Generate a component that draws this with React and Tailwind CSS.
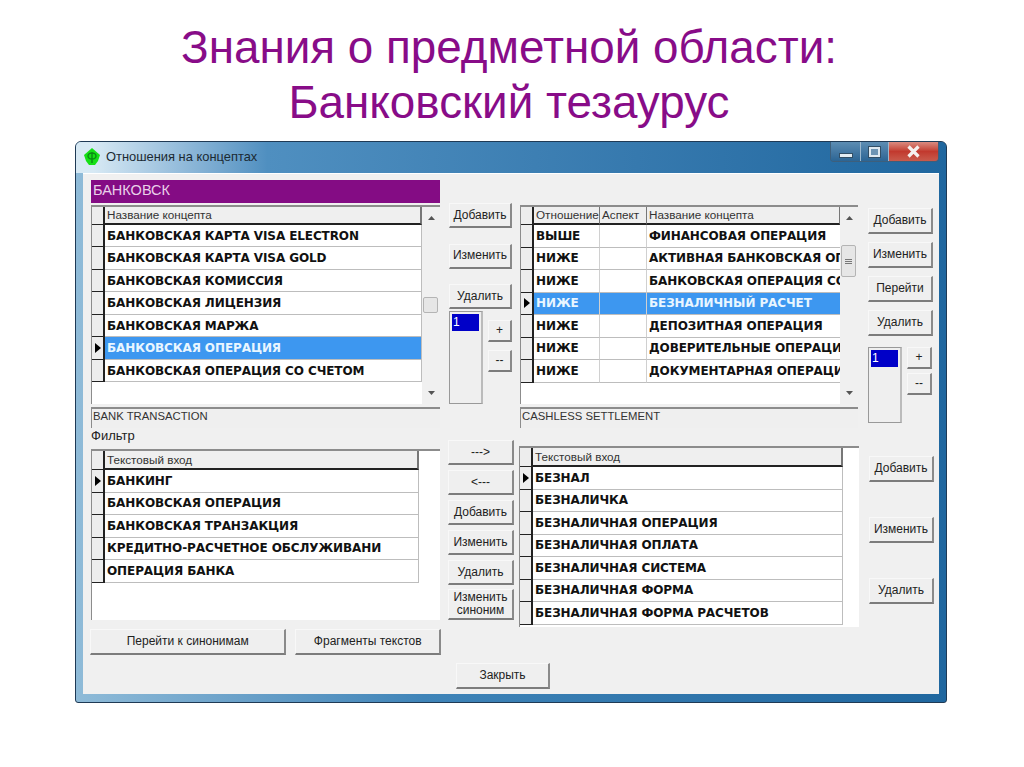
const FONT = "font-['Liberation_Sans',Arial,sans-serif]";

function Btn({ children, className = "" }) {
  return (
    <div className={`flex items-center justify-center text-center bg-[#efefef] border border-t-[#f8f8f8] border-l-[#f8f8f8] border-r-[#8a8a8a] border-b-[#7c7c7c] border-r-2 border-b-2 text-[12px] leading-[13px] text-[#222] ${className}`}>
      {children}
    </div>
  );
}

function Arrow({ up }) {
  return (
    <svg width="9" height="5" viewBox="0 0 9 5" className="block">
      <path d={up ? "M1 5 L4.5 1 L8 5 Z" : "M1 0 L4.5 4 L8 0 Z"} fill="#555" />
    </svg>
  );
}

function Scrollbar({ thumbTop, thumbH, grip }) {
  return (
    <div className="w-[18px] bg-[#f0f0f0] flex flex-col items-center justify-between py-[8px] relative shrink-0">
      <Arrow up />
      <div style={{ top: thumbTop, height: thumbH }} className="absolute left-[1px] right-[2px] bg-[#e6e6e6] border border-[#b4b4b4] rounded-[2px] flex flex-col items-center justify-center gap-[1px]">
        {grip && <><i className="block w-[7px] h-px bg-[#777]" /><i className="block w-[7px] h-px bg-[#777]" /><i className="block w-[7px] h-px bg-[#777]" /></>}
      </div>
      <Arrow />
    </div>
  );
}

function Indicator({ active }) {
  return (
    <div className="w-[13px] shrink-0 bg-[#ededed] border-r-2 border-b border-r-[#222] border-b-[#222] flex items-center justify-center">
      {active && (
        <svg width="6" height="10" viewBox="0 0 6 10"><path d="M0 0 L6 5 L0 10 Z" fill="#000" /></svg>
      )}
    </div>
  );
}

function Cell({ children, sel, className = "" }) {
  return (
    <div className={`font-['DejaVu_Sans',sans-serif] font-bold text-[12px] tracking-[-0.1px] whitespace-nowrap overflow-hidden flex items-center pl-[2px] border-b border-b-[#bdbdbd] ${sel ? "bg-[#3d97f0] text-[#e9f6ff]" : "text-[#111] bg-white"} ${className}`}>
      {children}
    </div>
  );
}

function Head({ children, className = "" }) {
  return (
    <div className={`text-[11.7px] text-[#333] flex items-center pl-[2px] bg-[#efefef] border-r border-r-[#777] whitespace-nowrap overflow-hidden ${className}`}>
      {children}
    </div>
  );
}

function SingleGrid({ title, rows, active, width }) {
  return (
    <div className="bg-white border-t-2 border-l border-t-[#8c8c8c] border-l-[#8c8c8c] flex-1 flex flex-col">
      <div className="flex h-[19px]" style={{ width }}>
        <Indicator />
        <Head className="flex-1 border-b-2 border-b-[#222] border-r-2 border-r-[#222]">{title}</Head>
      </div>
      {rows.map((r, i) => (
        <div key={r} className="flex h-[22.5px]" style={{ width }}>
          <Indicator active={i === active} />
          <Cell className="flex-1 border-r border-r-[#bdbdbd]">{r}</Cell>
        </div>
      ))}
    </div>
  );
}

function ListBox({ className }) {
  return (
    <div className={`bg-[#efefef] border-t border-l border-r-2 border-b border-[#999] border-r-[#bbb] p-[2px] ${className}`}>
      <div className="bg-[#0000c8] text-white text-[12px] leading-[16px] h-[17px] pl-[1px]">1</div>
    </div>
  );
}

function InfoBar({ children }) {
  return (
    <div className="h-[21px] mt-[3px] bg-[#efefef] border-t-2 border-l border-t-[#8c8c8c] border-l-[#8c8c8c] text-[11.3px] leading-[14px] pl-[1px] text-[#333] whitespace-nowrap">
      {children}
    </div>
  );
}

const leftRows = ["БАНКОВСКАЯ КАРТА VISA ELECTRON", "БАНКОВСКАЯ КАРТА VISA GOLD", "БАНКОВСКАЯ КОМИССИЯ", "БАНКОВСКАЯ ЛИЦЕНЗИЯ", "БАНКОВСКАЯ МАРЖА", "БАНКОВСКАЯ ОПЕРАЦИЯ", "БАНКОВСКАЯ ОПЕРАЦИЯ СО СЧЕТОМ"];
const relRows = [["ВЫШЕ", "ФИНАНСОВАЯ ОПЕРАЦИЯ"], ["НИЖЕ", "АКТИВНАЯ БАНКОВСКАЯ ОП"], ["НИЖЕ", "БАНКОВСКАЯ ОПЕРАЦИЯ СО"], ["НИЖЕ", "БЕЗНАЛИЧНЫЙ РАСЧЕТ"], ["НИЖЕ", "ДЕПОЗИТНАЯ ОПЕРАЦИЯ"], ["НИЖЕ", "ДОВЕРИТЕЛЬНЫЕ ОПЕРАЦИ"], ["НИЖЕ", "ДОКУМЕНТАРНАЯ ОПЕРАЦИ"]];
const filterRows = ["БАНКИНГ", "БАНКОВСКАЯ ОПЕРАЦИЯ", "БАНКОВСКАЯ ТРАНЗАКЦИЯ", "КРЕДИТНО-РАСЧЕТНОЕ ОБСЛУЖИВАНИ", "ОПЕРАЦИЯ БАНКА"];
const synRows = ["БЕЗНАЛ", "БЕЗНАЛИЧКА", "БЕЗНАЛИЧНАЯ ОПЕРАЦИЯ", "БЕЗНАЛИЧНАЯ ОПЛАТА", "БЕЗНАЛИЧНАЯ СИСТЕМА", "БЕЗНАЛИЧНАЯ ФОРМА", "БЕЗНАЛИЧНАЯ ФОРМА РАСЧЕТОВ"];

function TitleBar() {
  return (
    <div className="h-[31px] flex items-start pl-[6px] pr-[7px] bg-gradient-to-r from-[#d7e9f4] from-[2%] via-[#4f8fc0] via-[22%] to-[#1f679f] relative">
      <svg width="20" height="20" viewBox="0 0 20 20" className="mt-[5px] shrink-0">
        <path d="M10 1 L18 8 L16 14 L13 18 L7 18 L4 14 L2 8 Z" fill="#16e016" />
        <path d="M10 5 V16 M6 9 a4 3 0 0 1 8 0 a4 3 0 0 1 -8 0" stroke="#0a8a14" strokeWidth="1.4" fill="none" />
      </svg>
      <span className="ml-[4px] mt-[8px] text-[12.9px] leading-[14px] text-[#1b2a33] whitespace-nowrap">Отношения на концептах</span>
      <div className="ml-auto flex h-[20px] rounded-b-[4px] border border-t-0 border-[#3d5f7c] overflow-hidden">
        <div className="w-[30px] bg-gradient-to-b from-[#5d8db3] to-[#2c6594] flex items-end justify-center pb-[3px] border-r border-[#9cb9cf]">
          <i className="block w-[14px] h-[5px] bg-[#e4edf3] border border-[#324f66]" />
        </div>
        <div className="w-[28px] bg-gradient-to-b from-[#5d8db3] to-[#2c6594] flex items-center justify-center border-r border-[#9cb9cf]">
          <i className="block w-[11px] h-[10px] border-2 border-[#dfe9f0] outline outline-1 outline-[#324f66] bg-[#6d94b3]" />
        </div>
        <div className="w-[49px] bg-gradient-to-b from-[#d98a80] via-[#c2392e] to-[#c85a4c] flex items-center justify-center">
          <svg width="15" height="13" viewBox="0 0 15 13"><path d="M2.5 1.5 L12.5 11.5 M12.5 1.5 L2.5 11.5" stroke="#f5f0ee" strokeWidth="3.2" /></svg>
        </div>
      </div>
    </div>
  );
}

export default function App() {
  return (
    <div className={`w-[1024px] h-[767px] bg-white overflow-hidden ${FONT}`}>
      <h1 className="pt-[20px] pr-[6px] text-center text-[#880c88] text-[45.8px] leading-[55px] font-normal h-[141px]">
        Знания о предметной области:<br />Банковский тезаурус
      </h1>
      <div className="ml-[75px] w-[872px] h-[562px] flex flex-col rounded-t-[6px] rounded-b-[3px] overflow-hidden border border-[#1f3a55] bg-gradient-to-r from-[#8fbbd8] via-[#3f84b8] via-[40%] to-[#1f679f]">
        <TitleBar />
        <div className="flex-1 mx-[7px] mb-[8px] bg-[#f0f0f0] border-t border-t-[#fff] pt-[6px] pl-[7px] flex flex-col bg-clip-padding">
          {/* top row */}
          <div className="flex h-[248px]">
            <div className="w-[349px] flex flex-col ml-[1px]">
              <div className="h-[23px] bg-[#840c84] text-[#e9d0e9] text-[14.5px] leading-[21px] pl-[2px]">БАНКОВСК</div>
              <div className="flex h-[201px] mt-[2px] bg-white border-t-2 border-l border-t-[#8c8c8c] border-l-[#8c8c8c]">
                <div className="flex-1 flex flex-col min-w-0">
                  <div className="flex h-[18px]">
                    <Indicator />
                    <Head className="flex-1 border-b-2 border-b-[#222] border-r-2 border-r-[#222]">Название концепта</Head>
                  </div>
                  {leftRows.map((r, i) => (
                    <div key={r} className="flex h-[22.5px]">
                      <Indicator active={i === 5} />
                      <Cell sel={i === 5} className="flex-1 border-r border-r-[#bdbdbd]">{r}</Cell>
                    </div>
                  ))}
                </div>
                <Scrollbar thumbTop={90} thumbH={16} />
              </div>
              <InfoBar>BANK TRANSACTION</InfoBar>
            </div>

            <div className="w-[64px] ml-[9px] pt-[23px] relative shrink-0">
              <div className="flex flex-col gap-[15.5px] w-[63px]">
                <Btn className="h-[25px]">Добавить</Btn>
                <Btn className="h-[25px]">Изменить</Btn>
                <Btn className="h-[25px]">Удалить</Btn>
              </div>
              <div className="flex mt-[2px]">
                <ListBox className="w-[34px] h-[93px]" />
                <div className="ml-[5px] pt-[9px] flex flex-col gap-[8px]">
                  <Btn className="w-[24px] h-[22px]">+</Btn>
                  <Btn className="w-[24px] h-[22px]">--</Btn>
                </div>
              </div>
            </div>

            <div className="w-[338px] ml-[7px] flex flex-col">
              <div className="flex h-[201px] mt-[25px] bg-white border-t-2 border-l border-t-[#8c8c8c] border-l-[#8c8c8c]">
                <div className="flex-1 flex flex-col min-w-0">
                  <div className="flex h-[18px]">
                    <Indicator />
                    <Head className="w-[66px] border-b-2 border-b-[#222] shrink-0">Отношение</Head>
                    <Head className="w-[47px] border-b-2 border-b-[#222] shrink-0">Аспект</Head>
                    <Head className="flex-1 border-b-2 border-b-[#222]">Название концепта</Head>
                  </div>
                  {relRows.map((r, i) => (
                    <div key={i} className="flex h-[22.5px]">
                      <Indicator active={i === 3} />
                      <Cell sel={i === 3} className="w-[66px] shrink-0 border-r border-r-[#d0d0d0]">{r[0]}</Cell>
                      <Cell sel={i === 3} className="w-[47px] shrink-0 border-r border-r-[#d0d0d0]" />
                      <Cell sel={i === 3} className="flex-1 min-w-0">{r[1]}</Cell>
                    </div>
                  ))}
                </div>
                <Scrollbar thumbTop={38} thumbH={32} grip />
              </div>
              <InfoBar>CASHLESS SETTLEMENT</InfoBar>
            </div>

            <div className="w-[65px] ml-[10px] pt-[28px] shrink-0">
              <div className="flex flex-col gap-[8px]">
                <Btn className="h-[26px]">Добавить</Btn>
                <Btn className="h-[26px]">Изменить</Btn>
                <Btn className="h-[26px]">Перейти</Btn>
                <Btn className="h-[26px]">Удалить</Btn>
              </div>
              <div className="flex mt-[11px]">
                <ListBox className="w-[34px] h-[76px]" />
                <div className="ml-[5px] flex flex-col gap-[4px]">
                  <Btn className="w-[25px] h-[22px]">+</Btn>
                  <Btn className="w-[25px] h-[22px]">--</Btn>
                </div>
              </div>
            </div>
          </div>

          {/* bottom row */}
          <div className="flex mt-[4px]">
            <div className="w-[351px] flex flex-col">
              <div className="text-[13px] leading-[14px] h-[17px] pl-[1px] -mt-[3px] mb-[3px] text-[#222]">Фильтр</div>
              <div className="ml-[1px] w-[349px] h-[171px] flex">
                <SingleGrid title="Текстовый вход" rows={filterRows} active={0} width={327} />
              </div>
              <div className="flex gap-[9px] mt-[9px] h-[26px]">
                <Btn className="w-[197px]">Перейти к синонимам</Btn>
                <Btn className="w-[146px]">Фрагменты текстов</Btn>
              </div>
            </div>

            <div className="w-[66px] ml-[7px] pt-[8px] flex flex-col gap-[5px] shrink-0">
              <Btn className="h-[25px]">---&gt;</Btn>
              <Btn className="h-[25px]">&lt;---</Btn>
              <Btn className="h-[25px]">Добавить</Btn>
              <Btn className="h-[25px]">Изменить</Btn>
              <Btn className="h-[25px]">Удалить</Btn>
              <Btn className="h-[31px] -mt-[1px]">Изменить<br />синоним</Btn>
            </div>

            <div className="w-[340px] ml-[5px] pt-[14px] flex">
              <div className="h-[181px] w-full flex">
                <SingleGrid title="Текстовый вход" rows={synRows} active={0} width={323} />
              </div>
            </div>

            <div className="w-[65px] ml-[10px] pt-[24px] flex flex-col gap-[35px] shrink-0">
              <Btn className="h-[26px]">Добавить</Btn>
              <Btn className="h-[26px]">Изменить</Btn>
              <Btn className="h-[26px]">Удалить</Btn>
            </div>
          </div>

          <Btn className="w-[94px] h-[26px] ml-[366px] mt-[8px]">Закрыть</Btn>
        </div>
      </div>
    </div>
  );
}
